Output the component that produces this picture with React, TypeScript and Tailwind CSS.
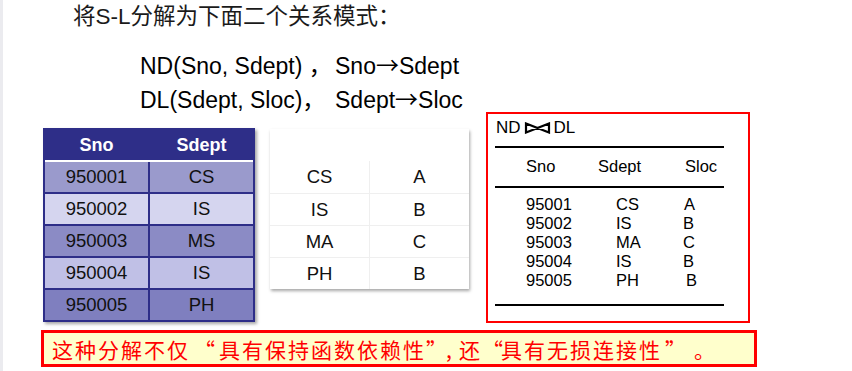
import React from "react";

const sans = { fontFamily: '"Liberation Sans", "Noto Sans CJK SC", sans-serif' };
const cjk = { fontFamily: '"Noto Sans CJK SC", "Liberation Sans", sans-serif' };

const leftRows: [string, string, string][] = [
  ["950001", "CS", "bg-[#9a9acc]"],
  ["950002", "IS", "bg-[#d5d5ef]"],
  ["950003", "MS", "bg-[#8b8bc5]"],
  ["950004", "IS", "bg-[#c0c0e6]"],
  ["950005", "PH", "bg-[#7f7fbf]"],
];

const midRows = [
  ["CS", "A"],
  ["IS", "B"],
  ["MA", "C"],
  ["PH", "B"],
];

const joinRows: { n: string; d: string; l: string; pl: string }[] = [
  { n: "95001", d: "CS", l: "A", pl: "pl-[1px]" },
  { n: "95002", d: "IS", l: "B", pl: "pl-0" },
  { n: "95003", d: "MA", l: "C", pl: "pl-0" },
  { n: "95004", d: "IS", l: "B", pl: "pl-0" },
  { n: "95005", d: "PH", l: "B", pl: "pl-[3px]" },
];

function Bowtie() {
  return (
    <svg width="27" height="12" viewBox="0 0 27 12" className="ml-[3px] mr-[3px]">
      <path d="M2 1.5 L2 10.5 L13.5 6 Z M25 1.5 L25 10.5 L13.5 6 Z" fill="none" stroke="#000" strokeWidth="2.2" strokeLinejoin="miter" />
    </svg>
  );
}

export default function App() {
  return (
    <div className="w-[852px] h-[371px] bg-white flex overflow-hidden text-black" style={sans}>
      <div className="w-[3px] shrink-0 bg-[#ebebef]" />
      <div className="flex flex-col">
        <div className="ml-[70px] mt-[3px] h-[28px] text-[22.5px] leading-[28px] text-[#1a1a1a]">
          将S-L分解为下面二个关系模式：
        </div>
        <div className="ml-[137px] mt-[16px] text-[23px]">
          <div className="flex h-[34px] leading-[34px] overflow-visible">
            <span className="w-[195px] whitespace-pre">ND(Sno, Sdept) <span style={cjk}>，</span></span>
            <span className="whitespace-pre">Sno<span style={cjk}>→</span>Sdept</span>
          </div>
          <div className="flex h-[34px] leading-[34px] overflow-visible">
            <span className="w-[195px] whitespace-pre">DL(Sdept, Sloc)<span style={cjk}>，</span></span>
            <span className="whitespace-pre">Sdept<span style={cjk}>→</span>Sloc</span>
          </div>
        </div>

        <div className="flex items-start mt-[-3px]">
          {/* left table */}
          <div className="ml-[40px] mt-[16px] w-[212px] border-2 border-[#2e2e88] bg-[#2e2e88] shadow-[2px_2px_3px_rgba(0,0,0,0.35)]">
            <div className="flex h-[30px] items-center text-white font-bold text-[18px]">
              <div className="w-[103px] text-center">Sno</div>
              <div className="w-[2px]" />
              <div className="w-[103px] text-center">Sdept</div>
            </div>
            <div className="h-[2px] bg-white" />
            <div className="grid grid-cols-[103px_103px] gap-[2px] text-[18.5px] text-[#111]">
              {leftRows.map(([a, b, bg]) => (
                <React.Fragment key={a}>
                  <div className={`${bg} h-[30px] flex items-center justify-center`}>{a}</div>
                  <div className={`${bg} h-[30px] flex items-center justify-center`}>{b}</div>
                </React.Fragment>
              ))}
            </div>
          </div>

          {/* middle table */}
          <div className="ml-[15px] mt-[17px] w-[199px] bg-white shadow-[1px_2px_3px_rgba(0,0,0,0.35)] text-[18.5px] text-[#111]">
            <div className="h-[32px]" />
            {midRows.map(([a, b], i) => (
              <div key={a + i} className={`flex h-[32px] ${i > 0 ? "border-t border-[#efefef]" : ""}`}>
                <div className="w-[100px] flex items-center justify-center border-r border-[#efefef]">{a}</div>
                <div className="flex-1 flex items-center justify-center">{b}</div>
              </div>
            ))}
          </div>

          {/* red box */}
          <div className="ml-[17px] w-[264px] h-[211px] border-2 border-[#ff0000] flex flex-col text-[16.5px]">
            <div className="pl-[8px] pt-[4px] h-[24px] leading-[20px] flex items-center text-[17px]">
              <span>ND</span>
              <Bowtie />
              <span>DL</span>
            </div>
            <div className="ml-[7px] mt-[8px] w-[229px] h-[2px] bg-black" />
            <div className="flex mt-[8px] leading-[20px] pl-[38px]">
              <span className="w-[72px]">Sno</span>
              <span className="w-[87px]">Sdept</span>
              <span>Sloc</span>
            </div>
            <div className="ml-[7px] mt-[10px] w-[229px] h-[2px] bg-black" />
            <div className="mt-[7px] flex flex-col">
              {joinRows.map((r) => (
                <div key={r.n} className="flex leading-[19px] pl-[38px]">
                  <span className="w-[90px]">{r.n}</span>
                  <span className="w-[67px]">{r.d}</span>
                  <span className={r.pl}>{r.l}</span>
                </div>
              ))}
            </div>
            <div className="ml-[7px] mt-[14px] w-[229px] h-[2px] bg-black" />
          </div>
        </div>

        <div className="ml-[38px] mt-[7px] w-[716px] h-[37px] border-[3px] border-[#ff0000] bg-[#ffffcc] flex items-center pl-[8px]">
          <div className="flex items-center text-[21px] leading-[28px] text-[#ff0000] tracking-[2px] whitespace-pre" style={cjk}>
            <span>这种分解不仅</span>
            <span className="inline-block w-[29px] text-center tracking-normal">“</span>
            <span>具有保持函数依赖性</span>
            <span className="inline-block w-[20px] text-left tracking-normal">”</span>
            <span className="inline-block w-[13px] text-left tracking-normal">,</span>
            <span>还</span>
            <span className="inline-block w-[19px] text-center tracking-normal">“</span>
            <span>具有无损连接性</span>
            <span className="inline-block w-[27px] text-center tracking-normal">”</span>
            <span className="ml-[5px]">。</span>
          </div>
        </div>
      </div>
    </div>
  );
}
